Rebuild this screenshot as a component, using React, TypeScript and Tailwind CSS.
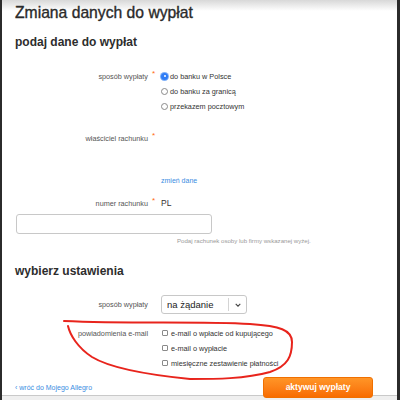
import type { ReactNode } from 'react'

function Row({
  label,
  required,
  className = '',
  children,
}: {
  label: string
  required?: boolean
  className?: string
  children?: ReactNode
}) {
  return (
    <div className={`flex text-[7.25px] leading-[15px] ${className}`}>
      <div className="h-[15px] w-[133px] shrink-0 text-right text-[#555]">{label}</div>
      <div className="h-[15px] w-[13px] shrink-0 pl-[4px]">
        {required && <span className="block text-[8px] leading-[9px] text-[#ff6a13]">*</span>}
      </div>
      <div className="flex-1">{children}</div>
    </div>
  )
}

function Radio({ checked, label }: { checked?: boolean; label: string }) {
  return (
    <div className="flex h-[15px] items-center gap-[2px] text-[7.3px] text-[#333]">
      {checked ? (
        <span className="flex h-[7px] w-[7px] items-center justify-center rounded-full bg-[#2f7df6] ring-1 ring-[#7fb0f8]">
          <span className="h-[2px] w-[2px] rounded-full bg-white" />
        </span>
      ) : (
        <span className="h-[7px] w-[7px] rounded-full border border-[#8a8a8a] bg-white" />
      )}
      <span>{label}</span>
    </div>
  )
}

function Check({ label }: { label: string }) {
  return (
    <div className="flex h-[15px] items-center gap-[3px] text-[7.3px] text-[#333]">
      <span className="ml-px h-[6px] w-[6px] rounded-[1px] border border-[#8a8a8a] bg-white" />
      <span>{label}</span>
    </div>
  )
}

export default function App() {
  return (
    <div className="relative h-[400px] w-[400px] overflow-hidden border-l-2 border-r-[3px] border-[#2b2b2b] bg-[linear-gradient(to_bottom,#d8d8d8_0px,#fff_11px,#fff_395px,#c9c9c9_395px,#c9c9c9_396px,#efefef_396px)] font-['Liberation_Sans',Arial,sans-serif] text-[#333]">
      <div className="pl-[13px] leading-[15px]">
        <h1 className="h-[25px] text-[15.7px] leading-[25px] text-[#2a2a2a] [-webkit-text-stroke:0.35px_#2a2a2a]">
          Zmiana danych do wypłat
        </h1>
        <h2 className="mt-[7px] text-[12px] font-bold leading-[20px] text-[#2d2d2d]">podaj dane do wypłat</h2>

        <Row label="sposób wypłaty" required className="mt-[16.5px]">
          <Radio checked label="do banku w Polsce" />
          <Radio label="do banku za granicą" />
          <Radio label="przekazem pocztowym" />
        </Row>

        <Row label="właściciel rachunku" required className="mt-[17px]" />

        <Row label="" className="mt-[27px]">
          <a className="block text-[7px] text-[#3a8de2]">zmień dane</a>
        </Row>

        <Row label="numer rachunku" required className="mt-[8px]">
          <span className="block text-[8.5px] text-[#333]">PL</span>
        </Row>

        <div className="ml-px mt-[3.5px] h-[20px] w-[196px] rounded-[3px] border border-[#c8c8c8] bg-white" />

        <p className="ml-[162px] mt-[3px] text-[6.1px] leading-[8px] text-[#9a9a9a]">
          Podaj rachunek osoby lub firmy wskazanej wyżej.
        </p>

        <h2 className="mt-[15.5px] text-[12px] font-bold leading-[20px] text-[#2d2d2d]">wybierz ustawienia</h2>

        <div className="mt-[14.5px] flex h-[19px] items-center text-[7.25px]">
          <div className="w-[133px] text-right text-[#555]">sposób wypłaty</div>
          <div className="w-[13px]" />
          <div className="flex h-[19px] w-[86px] items-center rounded-[3px] border border-[#c8c8c8] bg-white">
            <span className="flex-1 pl-[5px] text-[9.5px] text-[#222]">na żądanie</span>
            <span className="h-[13px] w-px bg-[#d4d4d4]" />
            <span className="flex w-[17px] justify-center">
              <svg width="6" height="4" viewBox="0 0 6 4">
                <path d="M0.7 0.8 L3 3.1 L5.3 0.8" fill="none" stroke="#444" strokeWidth="1.1" />
              </svg>
            </span>
          </div>
        </div>

        <Row label="powiadomienia e-mail" className="mt-[11.5px]">
          <Check label="e-mail o wpłacie od kupującego" />
          <Check label="e-mail o wypłacie" />
          <Check label="miesięczne zestawienie płatności" />
        </Row>

        <div className="mr-[24px] mt-[6.5px] flex h-[21px] items-center justify-between">
          <a className="text-[7px] text-[#3a8de2]">‹ wróć do Mojego Allegro</a>
          <button className="h-[21px] w-[110px] rounded-[3px] border border-[#f07000] bg-linear-to-b from-[#ff9526] to-[#f86c00] text-[8.5px] font-bold text-white">
            aktywuj wypłaty
          </button>
        </div>
      </div>

      <svg className="pointer-events-none absolute left-[-2px] top-0" width="400" height="400" viewBox="0 0 400 400">
        <path
          d="M64 321 C130 324 200 321 250 324 C280 326 292 330 292 342 C292 356 288 366 270 372 C245 379 215 379 190 379 C150 375 110 368 92 357 C78 348 70 335 68 326"
          fill="none"
          stroke="#e8241c"
          strokeWidth="2"
          strokeLinecap="round"
        />
      </svg>
    </div>
  )
}
